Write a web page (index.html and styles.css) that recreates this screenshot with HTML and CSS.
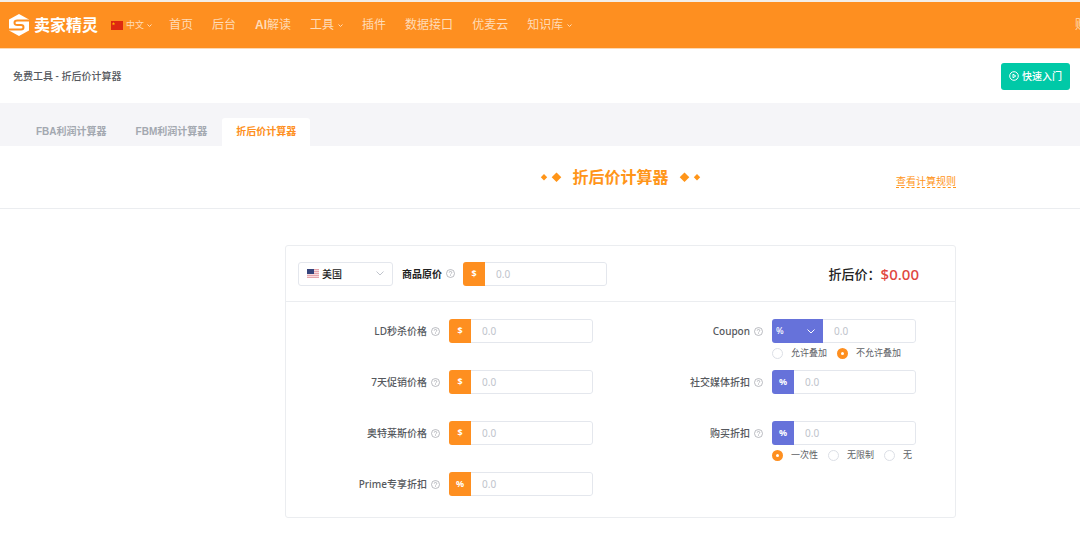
FILE: index.html
```html
<!DOCTYPE html>
<html lang="zh-CN">
<head>
    <meta charset="UTF-8">
    <meta name="viewport" content="width=device-width, initial-scale=1.0">
    <title>折后价计算器</title>
    <link rel="stylesheet" href="styles.css">
</head>
<body>
    <svg class="sprite" aria-hidden="true">
        <symbol id="help" viewBox="0 0 18 18">
            <circle cx="9" cy="9" r="8" fill="none" stroke="currentColor" stroke-width="1.5"/>
            <path d="M6.5 7.2a2.5 2.5 0 1 1 3.6 2.2c-.8.4-1.1.8-1.1 1.6M9 12.4v1.4" fill="none" stroke="currentColor" stroke-width="1.5"/>
        </symbol>
        <symbol id="down" viewBox="0 0 10 6">
            <path d="M1 1l4 4 4-4" fill="none" stroke="currentColor" stroke-width="2"/>
        </symbol>
        <symbol id="diamonds" viewBox="0 0 22 10">
            <path d="M4 2l3.200 3.200L4 8.400.8 5.200zM16.500.4l4.800 4.800-4.800 4.800-4.800-4.800z" fill="currentColor"/>
        </symbol>
    </svg>

    <header class="header">
        <a class="logo" href="#">
            <svg width="20" height="22" viewBox="0 0 20 22">
                <path d="M10 0l10 5.500v11L10 22 0 16.500v-11z" fill="#fff"/>
                <path d="M20 6.500H8.500Q5.500 6.500 5.500 8.800T8.500 11H12q2.500 0 2.500 2.200T12 15.500H0" fill="none" stroke="#fe8f20" stroke-width="2"/>
            </svg>
            <span>卖家精灵</span>
        </a>
        <button class="lang" type="button">
            <svg width="12" height="9" viewBox="0 0 12 9">
                <path d="M0 0h12v9H0z" fill="#de2910"/>
                <path d="M2.500 1l.5 1.200h1.200l-1 .8.4 1.200-1.100-.7-1.100.7.4-1.200-1-.8H2z" fill="#ffb400"/>
            </svg>
            <span>中文</span>
            <svg class="arrow"><use href="#down"/></svg>
        </button>
        <nav class="nav">
            <a href="#">首页</a>
            <a href="#">后台</a>
            <a href="#"><b>AI</b>解读</a>
            <a href="#">工具<svg class="arrow"><use href="#down"/></svg></a>
            <a href="#">插件</a>
            <a href="#">数据接口</a>
            <a href="#">优麦云</a>
            <a href="#">知识库<svg class="arrow"><use href="#down"/></svg></a>
        </nav>
        <a class="buy" href="#">购买</a>
    </header>

    <div class="page-bar">
        <span>免费工具 - 折后价计算器</span>
        <button class="start" type="button">
            <svg width="10" height="10" viewBox="0 0 10 10" fill="none" stroke="#fff">
                <circle cx="5" cy="5" r="4.300"/>
                <path d="M4 3.200v3.600L6.800 5z"/>
            </svg>
            快速入门
        </button>
    </div>

    <nav class="tabs">
        <a href="#">FBA利润计算器</a>
        <a href="#">FBM利润计算器</a>
        <a class="active" href="#">折后价计算器</a>
    </nav>

    <div class="title-bar">
        <div class="title-inner">
            <h1>
                <svg class="diamonds"><use href="#diamonds"/></svg>
                折后价计算器
                <svg class="diamonds flip"><use href="#diamonds"/></svg>
            </h1>
            <a class="rules" href="#">查看计算规则</a>
        </div>
    </div>

    <main class="main">
        <form class="card">
            <div class="card-top">
                <div class="country">
                    <svg width="12" height="9" viewBox="0 0 12 9">
                        <path d="M0 0h12v9H0z" fill="#f6dcdf"/>
                        <path d="M0 .5h12M0 2.500h12M0 4.500h12M0 6.500h12M0 8.500h12" stroke="#e5a5ac"/>
                        <path d="M0 0h7v5H0z" fill="#35447c"/>
                    </svg>
                    <select aria-label="站点">
                        <option>美国</option>
                    </select>
                </div>
                <label class="label strong" for="price">商品原价 <svg class="help"><use href="#help"/></svg></label>
                <div class="group">
                    <span class="unit">$</span>
                    <input id="price" type="text" placeholder="0.0">
                </div>
                <div class="result">折后价：<output>$0.00</output></div>
            </div>

            <div class="fields">
                <div class="col">
                    <div class="row">
                        <label class="label" for="ld">LD秒杀价格 <svg class="help"><use href="#help"/></svg></label>
                        <div class="group">
                            <span class="unit">$</span>
                            <input id="ld" type="text" placeholder="0.0">
                        </div>
                    </div>
                    <div class="row">
                        <label class="label" for="week">7天促销价格 <svg class="help"><use href="#help"/></svg></label>
                        <div class="group">
                            <span class="unit">$</span>
                            <input id="week" type="text" placeholder="0.0">
                        </div>
                    </div>
                    <div class="row">
                        <label class="label" for="outlet">奥特莱斯价格 <svg class="help"><use href="#help"/></svg></label>
                        <div class="group">
                            <span class="unit">$</span>
                            <input id="outlet" type="text" placeholder="0.0">
                        </div>
                    </div>
                    <div class="row">
                        <label class="label" for="prime">Prime专享折扣 <svg class="help"><use href="#help"/></svg></label>
                        <div class="group">
                            <span class="unit">%</span>
                            <input id="prime" type="text" placeholder="0.0">
                        </div>
                    </div>
                </div>

                <div class="col">
                    <div class="row">
                        <label class="label" for="coupon">Coupon <svg class="help"><use href="#help"/></svg></label>
                        <div>
                            <div class="group">
                                <select class="unit-select" aria-label="Coupon">
                                    <option>%</option>
                                    <option>$</option>
                                </select>
                                <input id="coupon" type="text" placeholder="0.0">
                            </div>
                            <div class="radios">
                                <label><input type="radio" name="stack">允许叠加</label>
                                <label><input type="radio" name="stack" checked>不允许叠加</label>
                            </div>
                        </div>
                    </div>
                    <div class="row">
                        <label class="label" for="social">社交媒体折扣 <svg class="help"><use href="#help"/></svg></label>
                        <div class="group">
                            <span class="unit blue">%</span>
                            <input id="social" type="text" placeholder="0.0">
                        </div>
                    </div>
                    <div class="row">
                        <label class="label" for="purchase">购买折扣 <svg class="help"><use href="#help"/></svg></label>
                        <div>
                            <div class="group">
                                <span class="unit blue">%</span>
                                <input id="purchase" type="text" placeholder="0.0">
                            </div>
                            <div class="radios">
                                <label><input type="radio" name="limit" checked>一次性</label>
                                <label><input type="radio" name="limit">无限制</label>
                                <label><input type="radio" name="limit">无</label>
                            </div>
                        </div>
                    </div>
                </div>
            </div>
        </form>
    </main>
</body>
</html>
```

FILE: styles.css
```css
* {
    box-sizing: border-box;
}
body {
    margin: 0;
    overflow-x: hidden;
    background: #fff;
    color: #606266;
    font-family: "Noto Sans", "Noto Sans CJK SC", sans-serif;
    font-size: 10px;
    line-height: 16px;
}
a {
    color: inherit;
    text-decoration: none;
}
button, input, select {
    font: inherit;
    color: inherit;
}
button {
    border: none;
    cursor: pointer;
}
.sprite {
    display: none;
}

/* header */
.header {
    display: flex;
    align-items: center;
    height: 49px;
    padding-left: 9px;
    border-top: 2px solid #f3eee9;
    border-bottom: 1px solid #fdd9b3;
    background: #fe8f20;
    color: #ffdcb8;
    overflow: hidden;
}
.logo {
    display: flex;
    align-items: center;
    gap: 5px;
    color: #fff;
    font-size: 16px;
    font-weight: bold;
    white-space: nowrap;
}
.lang {
    display: flex;
    align-items: center;
    gap: 3px;
    margin-left: 13px;
    padding: 0;
    background: none;
    font-size: 9px;
    white-space: nowrap;
}
.arrow {
    width: 5px;
    height: 3px;
}
.nav {
    display: flex;
    flex: 1;
    gap: 19px;
    margin-left: 17px;
    font-size: 12px;
    white-space: nowrap;
}
.nav a {
    display: flex;
    align-items: center;
}
.nav b {
    font-family: "Liberation Sans", sans-serif;
}
.nav .arrow {
    margin-left: 4px;
}
.buy {
    margin-right: -19px;
    font-size: 12px;
    white-space: nowrap;
}

.page-bar {
    display: flex;
    align-items: center;
    justify-content: space-between;
    height: 54px;
    padding: 0 10px 0 13px;
    color: #55585d;
    font-weight: 500;
}
.start {
    display: flex;
    align-items: center;
    gap: 3px;
    height: 27px;
    padding: 0 8px;
    border-radius: 3px;
    background: #00c9a7;
    color: #fff;
    font-weight: 500;
}

/* tabs */
.tabs {
    display: flex;
    align-items: flex-end;
    gap: 1px;
    height: 43px;
    padding-left: 22px;
    background: #f5f5f8;
    color: #a3a8b0;
    font-family: "Liberation Sans", "Noto Sans CJK SC", sans-serif;
    font-weight: bold;
}
.tabs a {
    padding: 0 14px;
    border-radius: 3px 3px 0 0;
    line-height: 28px;
}
.tabs .active {
    background: #fff;
    color: #fe8f20;
}

/* title */
.title-bar {
    padding-left: 161px;
    border-bottom: 1px solid #ebedf0;
}
.title-inner {
    display: grid;
    grid-template-columns: 1fr auto 1fr;
    align-items: center;
    max-width: 671px;
    height: 62px;
    margin: 0 auto;
}
h1 {
    display: flex;
    grid-column: 2;
    align-items: center;
    gap: 10px;
    margin: 0;
    color: #ff9519;
    font-size: 16px;
    line-height: 24px;
}
.diamonds {
    width: 22px;
    height: 10px;
}
.flip {
    transform: scaleX(-1);
}
.rules {
    justify-self: end;
    margin-top: 8px;
    border-bottom: 1px dashed #ff9519;
    color: #ff9519;
    line-height: 12px;
}

/* card */
.main {
    padding: 36px 0 24px 161px;
}
.card {
    max-width: 671px;
    margin: 0 auto;
    border: 1px solid #ebedf0;
    border-radius: 3px;
}
.card-top {
    display: flex;
    align-items: center;
    height: 56px;
    padding: 0 36px 0 12px;
    border-bottom: 1px solid #ebedf0;
}
.country {
    display: flex;
    align-items: center;
    width: 95px;
    height: 24px;
    margin-right: 9px;
    padding: 0 8px;
    border: 1px solid #e4e7ed;
    border-radius: 3px;
}
.country select {
    flex: 1;
    padding: 0 0 0 3px;
    border: none;
    appearance: none;
    background: url("data:image/svg+xml,%3Csvg xmlns='http://www.w3.org/2000/svg' width='8' height='5' fill='none' stroke='%23c0c4cc'%3E%3Cpath d='M.5.5L4 4 7.5.5'/%3E%3C/svg%3E") no-repeat right center;
    color: #222;
    font-weight: 500;
}
.label {
    display: flex;
    align-items: center;
    justify-content: flex-end;
    gap: 4px;
    height: 24px;
    color: #55585d;
    font-weight: 500;
    white-space: nowrap;
}
.strong {
    margin-right: 8px;
    color: #222;
    font-weight: bold;
}
.help {
    width: 9px;
    height: 9px;
    color: #a4a7ad;
}
.group {
    display: flex;
    width: 144px;
    height: 24px;
    border-radius: 3px;
    overflow: hidden;
}
.group input {
    flex: 1;
    min-width: 0;
    padding: 0 11px;
    border: 1px solid #e4e7ed;
    border-left: none;
    border-radius: 0 3px 3px 0;
    outline: none;
}
.group input::placeholder {
    color: #c0c4cc;
}
.unit {
    width: 22px;
    background: #fe8f20;
    color: #fff;
    font-size: 9px;
    font-weight: bold;
    line-height: 24px;
    text-align: center;
}
.blue {
    background: #6672da;
}
.unit-select {
    width: 51px;
    padding: 0 4px;
    border: none;
    border-radius: 0;
    appearance: none;
    background: #6672da url("data:image/svg+xml,%3Csvg xmlns='http://www.w3.org/2000/svg' width='8' height='5' fill='none' stroke='white'%3E%3Cpath d='M.5.5L4 4 7.5.5'/%3E%3C/svg%3E") no-repeat right 8px center;
    color: #fff;
    font-size: 9px;
    font-weight: 500;
}
.result {
    display: flex;
    margin-left: auto;
    color: #222;
    font-size: 13px;
    font-weight: 500;
}
.result output {
    color: #e0473f;
    font-size: 15px;
}

.fields {
    display: grid;
    grid-template-columns: 323fr 346fr;
    padding: 17px 0 0;
}
.col {
    display: flex;
    flex-direction: column;
    gap: 6px;
}
.row {
    display: grid;
    grid-template-columns: 154px 1fr;
    column-gap: 9px;
    min-height: 45px;
}
.radios {
    display: flex;
    gap: 10px;
    margin-top: 3px;
    font-size: 9px;
    line-height: 14px;
    white-space: nowrap;
}
.radios label {
    display: flex;
    align-items: center;
    gap: 8px;
}
.radios input {
    width: 11px;
    height: 11px;
    margin: 0;
    border: 1px solid #dcdfe6;
    border-radius: 50%;
    appearance: none;
    background: #fff;
}
.radios input:checked {
    border: 4px solid #fe8f20;
}
```
